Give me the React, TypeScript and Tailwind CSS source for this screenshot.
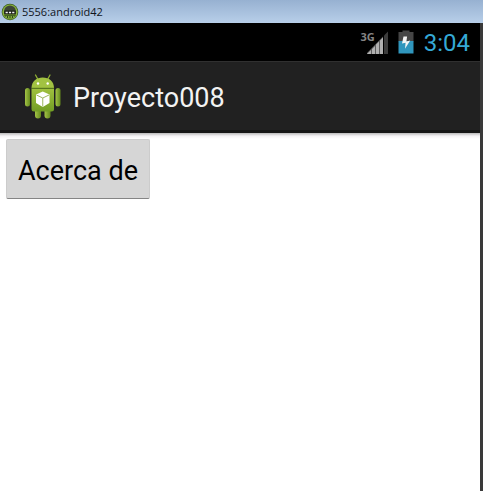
function EmulatorIcon() {
  return (
    <svg viewBox="0 0 18 18" className="size-[18px] shrink-0" aria-hidden="true">
      <circle cx="9" cy="9" r="8.3" fill="#3c5c22" />
      <circle cx="9" cy="9" r="7.6" fill="#8ab53c" />
      <path d="M3.2 10.5V8a5.800 5.600 0 0 1 11.600 0v2.500z" fill="#3d4637" />
      <path d="M3.200 7.500h11.600v4H3.200z" fill="#1b2016" />
      <path d="M4.600 9.500h2.200M7.900 9.500h2.200M11.200 9.500h2.200" stroke="#f2f2f2" strokeWidth="1.500" />
      <path d="M3 12.300h12l-2.400 3H5.400z" fill="#2c461a" />
      <path d="M4.500 14h9" stroke="#9ccd4a" strokeWidth="1.500" strokeDasharray="1.500 1" />
    </svg>
  );
}

function SignalIcon() {
  return (
    <div className="flex items-start">
      <span className="font-['Open_Sans','Noto_Sans',sans-serif] text-[11px] leading-4 font-bold text-[#858585]">3G</span>
      <svg viewBox="6 0 22 26" className="-ml-2 h-[26px] w-[22px]" aria-hidden="true">
        <path d="M5 25L22 7.500V25z" fill="#5c5c5c" />
        <path d="M6 25l4-4v4zM11 20l3-3v8h-3zM15 15.500l3-3V25h-3zM19 11.500l3-3V25h-3z" fill="#b0b0b0" />
        <path d="M23 6.500l4-4V25h-4z" fill="#3c3c3c" />
      </svg>
    </div>
  );
}

function BatteryIcon() {
  return (
    <svg viewBox="0 0 16 24" className="h-6 w-4" role="img" aria-label="Battery charging">
      <path d="M4.500 0.500h7V2h4v9.500H0.500V2h4z" fill="#464646" />
      <path d="M0.500 11h15v12.500h-15z" fill="#3096bd" />
      <path d="M5.500 6.500l-1.500 7 3.600-.8-.6 6 5.200-8.200-3.800.9.700-4.900z" fill="#f4f4f4" />
    </svg>
  );
}

function AndroidIcon() {
  return (
    <svg viewBox="0 0 38 46" className="h-[46px] w-[38px]" aria-hidden="true">
      <defs>
        <linearGradient id="body" x1="0" y1="0" x2="0" y2="1">
          <stop offset="0" stopColor="#a0c13f" />
          <stop offset="1" stopColor="#729d24" />
        </linearGradient>
        <linearGradient id="limb" x1="0" y1="0" x2="1" y2="0">
          <stop offset="0" stopColor="#a4c446" />
          <stop offset="1" stopColor="#64891d" />
        </linearGradient>
      </defs>
      <path d="M11.500 1l2.500 4.500M26 1l-2.500 4.500" stroke="#8fae34" strokeWidth="1.300" strokeLinecap="round" />
      <rect x="11" y="32" width="6" height="12.500" rx="3" fill="url(#limb)" />
      <rect x="20.500" y="32" width="6" height="12.500" rx="3" fill="url(#limb)" />
      <rect x="1" y="14" width="5" height="18.500" rx="2.500" fill="url(#limb)" />
      <rect x="31.500" y="14" width="5" height="18.500" rx="2.500" fill="url(#limb)" />
      <path d="M7.500 14.500h22.500V35q0 2.500-2.500 2.500H10q-2.500 0-2.500-2.500z" fill="url(#body)" />
      <path d="M7.500 14C7.500 7.500 12.500 3.500 18.750 3.500S30 7.500 30 14z" fill="#a2c242" />
      <path d="M7.500 14.300h22.500" stroke="#587a1b" strokeWidth="1" />
      <circle cx="14" cy="9.500" r="1.200" fill="#fff" />
      <circle cx="23.700" cy="9.500" r="1.200" fill="#fff" />
      <path d="M18.750 17.500l6.750 3v8.500l-6.750 4-6.750-4v-8.500z" fill="#fff" />
      <path d="M12.500 21l6.250 3 6.250-3M18.750 24v8.500" stroke="#9db65e" strokeWidth="1" fill="none" />
    </svg>
  );
}

export default function App() {
  return (
    <div className="flex min-h-screen flex-col bg-white">
      <header className="flex h-[23px] items-center gap-[3px] bg-linear-to-b from-[#97b1d1] to-[#b8cfe9] pl-px">
        <EmulatorIcon />
        <h1 className="font-['Open_Sans','Noto_Sans',sans-serif] text-[11px] leading-4 text-[#10151c]">5556:android42</h1>
      </header>
      <div className="flex grow flex-col border-r-3 border-[#3a3a3a] bg-white font-[Roboto,sans-serif]">
        <div className="flex h-[38px] items-center justify-end bg-black pr-2.5">
          <SignalIcon />
          <div className="mr-2.5 ml-[9px]">
            <BatteryIcon />
          </div>
          <time className="pt-0.5 text-2xl text-[#35a9d6]">3:04</time>
        </div>
        <div className="flex h-[72px] items-center gap-[11px] border-t border-b-3 border-t-[#303030] border-b-[#151515] bg-[#212121] pt-0.5 pl-6">
          <AndroidIcon />
          <h2 className="pt-0.5 text-[27px] leading-8 text-[#f3f3f3]">Proyecto008</h2>
        </div>
        <div className="h-1.5 bg-linear-to-b from-[#b8b8b8] via-[#f3f1f3] to-white" />
        <main className="px-1.5">
          <button
            type="button"
            className="h-[60px] rounded-xs border border-[#cccccc] border-b-[#858585] bg-[#d6d6d6] px-[11px] pt-[3px] text-[27px] leading-8 text-black"
          >
            Acerca de
          </button>
        </main>
      </div>
    </div>
  );
}
